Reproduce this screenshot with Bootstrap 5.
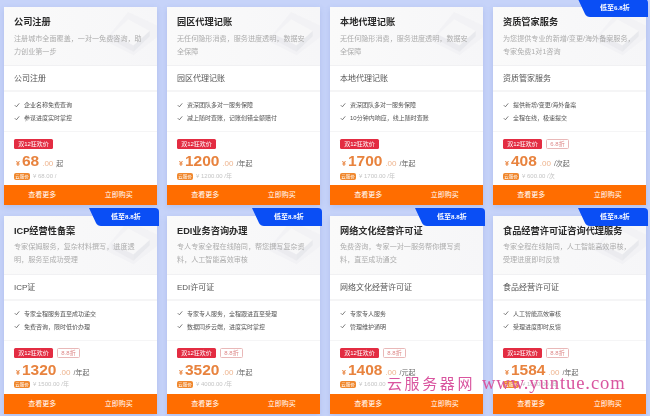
<!doctype html>
<html lang="zh"><head><meta charset="utf-8"><title>服务</title>
<link href="https://cdn.jsdelivr.net/npm/bootstrap@5.3.0/dist/css/bootstrap.min.css" rel="stylesheet">
<style>
html,body{height:416px;overflow:hidden;background:#c6d3f9}
body{font-family:"Liberation Sans","Noto Sans CJK SC",sans-serif;position:relative}
.sheet{display:grid;grid-template-columns:repeat(4,153px);grid-auto-rows:198px;gap:10.5px 10px;padding:7px 4px 0;filter:blur(.4px)}
.offer{position:relative;background:#fff;border:0;border-radius:0;color:#333;box-shadow:0 2px 6px rgba(80,100,180,.18)}
.offer-head{position:relative;height:59px;padding:10px 10px 0;background:linear-gradient(90deg,#fafafa,#f6f6f8);overflow:hidden;flex:none;border-bottom:1px solid #f1f1f3}
.offer-art{position:absolute;right:0;top:3px;width:56px;height:50px}
.offer-title{position:relative;font-size:9.2px;line-height:11px;font-weight:700;color:#2a2a2a;margin:0 0 4.500px;white-space:nowrap}
.offer-desc{position:relative;font-size:7.1px;line-height:13px;color:#adadad;margin:0}
.offer-name{height:26px;line-height:25px;padding:0 10px;font-size:8px;color:#555;border-bottom:2px solid #f5f5f6;flex:none}
.offer-list{height:40px;padding:7px 10px 0;margin:0;list-style:none;font-size:6px;line-height:13px;color:#555;border-bottom:1px solid #f5f5f6;flex:none}
.offer-list svg{width:6px;height:6px;margin-right:4px;vertical-align:-.5px}
.offer-price{padding:7px 10px 0;flex:1 1 auto;min-height:0;overflow:hidden}
.tag-row{display:flex;gap:4px;height:10px}
.tag-red{width:39px;height:10px;background:#e32c42;color:#fff;border-radius:1.5px;font-size:6px;line-height:10px;text-align:center}
.tag-line{width:23px;height:10px;border:1px solid #e9b8b8;color:#d88;border-radius:1.5px;font-size:6px;line-height:8px;text-align:center}
.amount{display:flex;align-items:baseline;height:19px;line-height:19px;color:#e8833e;margin-top:2px;padding-left:2px}
.amount-y{font-size:7px;margin-right:2px;font-weight:700}
.amount-n{font-size:15.5px;font-weight:700}
.amount-d{font-size:8px;margin:0 3px 0 3px;color:#eeb48e}
.amount-u{font-size:7px;color:#666}
.old{display:flex;align-items:center;gap:3px;height:8px;margin-top:2px;font-size:6px;color:#c4c4c4;white-space:nowrap}
.old-tag{width:16px;height:7px;background:#f0882e;color:#fff;border-radius:2px;font-size:4.5px;line-height:7px;text-align:center}
.offer-btns{display:flex;height:20px;background:#ff6d00;flex:none}
.offer-btn{flex:1 1 0;color:#fff;font-size:7px;line-height:20px;text-align:center;padding:0;border:0;border-radius:0;background:transparent}
.ribbon{position:absolute;top:-8px;right:-2px;width:70px;height:18px;z-index:2;color:#fff;font:700 7px/18px "Liberation Serif","Noto Sans CJK SC",serif;padding-left:22px}
.ribbon svg{position:absolute;inset:0;width:70px;height:18px;z-index:-1}
.mark-wm{position:absolute;left:387px;top:372px;z-index:5;white-space:nowrap;color:#d9559f;font-family:"Liberation Serif","Noto Sans CJK SC",serif;font-size:15px;line-height:22px}
.mark-cn{letter-spacing:2.6px;margin-right:7px}
.mark-en{font-size:18.6px;letter-spacing:.9px}
</style></head>
<body>
<svg width="0" height="0" class="position-absolute">
<defs>
<symbol id="art" viewBox="0 0 62 55"><path d="M30 2 62 17V30L36 50 4 34Z" fill="#efeff2" opacity=".65"/><path d="M30 10 54 23 36 39 12 27Z" fill="#f7f7f8"/><path d="M12 27 36 39V46L12 33Z" fill="#e8e8ec" opacity=".7"/><path d="M36 39 54 23V29L36 46Z" fill="#e4e5e9" opacity=".7"/></symbol>
<symbol id="tick" viewBox="0 0 8 8"><path d="M1 4.200 3.200 6.400 7 1.800" fill="none" stroke="#555" stroke-width="1"/></symbol>
<symbol id="rib" viewBox="0 0 70 18"><path d="M0 0H66Q70 0 70 4V18H12Q8.500 18 7 15Z" fill="#0a4ef5"/></symbol>
</defs></svg>
<main class="sheet">

<article class="card offer d-flex flex-column">
<header class="offer-head"><svg class="offer-art"><use href="#art"/></svg><h3 class="offer-title">公司注册</h3><p class="offer-desc">注册城市全面覆盖，一对一免费咨询，助力创业第一步</p></header>
<div class="offer-name">公司注册</div>
<ul class="offer-list"><li><svg><use href="#tick"/></svg>企业名称免费查询</li><li><svg><use href="#tick"/></svg>参谋进度实时掌控</li></ul>
<div class="offer-price"><div class="tag-row"><span class="tag-red">双12狂欢价</span></div><div class="amount"><span class="amount-y">¥</span><span class="amount-n">68</span><span class="amount-d">.00</span><span class="amount-u">起</span></div><div class="old"><span class="old-tag">云服价</span>¥ 68.00 /</div></div>
<div class="offer-btns"><a class="btn offer-btn">查看更多</a><a class="btn offer-btn">立即购买</a></div>
</article>

<article class="card offer d-flex flex-column">
<header class="offer-head"><svg class="offer-art"><use href="#art"/></svg><h3 class="offer-title">园区代理记账</h3><p class="offer-desc">无任何隐形消费，服务进度透明，数据安全保障</p></header>
<div class="offer-name">园区代理记账</div>
<ul class="offer-list"><li><svg><use href="#tick"/></svg>资深团队多对一服务保障</li><li><svg><use href="#tick"/></svg>减上随时查账，记账创错全额赔付</li></ul>
<div class="offer-price"><div class="tag-row"><span class="tag-red">双12狂欢价</span></div><div class="amount"><span class="amount-y">¥</span><span class="amount-n">1200</span><span class="amount-d">.00</span><span class="amount-u">/年起</span></div><div class="old"><span class="old-tag">云服价</span>¥ 1200.00 /年</div></div>
<div class="offer-btns"><a class="btn offer-btn">查看更多</a><a class="btn offer-btn">立即购买</a></div>
</article>

<article class="card offer d-flex flex-column">
<header class="offer-head"><svg class="offer-art"><use href="#art"/></svg><h3 class="offer-title">本地代理记账</h3><p class="offer-desc">无任何隐形消费，服务进度透明，数据安全保障</p></header>
<div class="offer-name">本地代理记账</div>
<ul class="offer-list"><li><svg><use href="#tick"/></svg>资深团队多对一服务保障</li><li><svg><use href="#tick"/></svg>10分钟内响应，线上随时查账</li></ul>
<div class="offer-price"><div class="tag-row"><span class="tag-red">双12狂欢价</span></div><div class="amount"><span class="amount-y">¥</span><span class="amount-n">1700</span><span class="amount-d">.00</span><span class="amount-u">/年起</span></div><div class="old"><span class="old-tag">云服价</span>¥ 1700.00 /年</div></div>
<div class="offer-btns"><a class="btn offer-btn">查看更多</a><a class="btn offer-btn">立即购买</a></div>
</article>

<article class="card offer d-flex flex-column">
<div class="ribbon"><svg><use href="#rib"/></svg>低至6.8折</div>
<header class="offer-head"><svg class="offer-art"><use href="#art"/></svg><h3 class="offer-title">资质管家服务</h3><p class="offer-desc">为您提供专业的新增/变更/海外备案服务，专家免费1对1咨询</p></header>
<div class="offer-name">资质管家服务</div>
<ul class="offer-list"><li><svg><use href="#tick"/></svg>提供新增/变更/海外备案</li><li><svg><use href="#tick"/></svg>全程在线，极速提交</li></ul>
<div class="offer-price"><div class="tag-row"><span class="tag-red">双12狂欢价</span><span class="tag-line">6.8折</span></div><div class="amount"><span class="amount-y">¥</span><span class="amount-n">408</span><span class="amount-d">.00</span><span class="amount-u">/次起</span></div><div class="old"><span class="old-tag">云服价</span>¥ 600.00 /次</div></div>
<div class="offer-btns"><a class="btn offer-btn">查看更多</a><a class="btn offer-btn">立即购买</a></div>
</article>

<article class="card offer d-flex flex-column">
<div class="ribbon"><svg><use href="#rib"/></svg>低至8.8折</div>
<header class="offer-head"><svg class="offer-art"><use href="#art"/></svg><h3 class="offer-title">ICP经营性备案</h3><p class="offer-desc">专家保姆服务，复杂材料撰写，进度透明，服务至成功受理</p></header>
<div class="offer-name">ICP证</div>
<ul class="offer-list"><li><svg><use href="#tick"/></svg>专家全程服务直至成功递交</li><li><svg><use href="#tick"/></svg>免费咨询，限时低价办理</li></ul>
<div class="offer-price"><div class="tag-row"><span class="tag-red">双12狂欢价</span><span class="tag-line">8.8折</span></div><div class="amount"><span class="amount-y">¥</span><span class="amount-n">1320</span><span class="amount-d">.00</span><span class="amount-u">/年起</span></div><div class="old"><span class="old-tag">云服价</span>¥ 1500.00 /年</div></div>
<div class="offer-btns"><a class="btn offer-btn">查看更多</a><a class="btn offer-btn">立即购买</a></div>
</article>

<article class="card offer d-flex flex-column">
<div class="ribbon"><svg><use href="#rib"/></svg>低至8.8折</div>
<header class="offer-head"><svg class="offer-art"><use href="#art"/></svg><h3 class="offer-title">EDI业务咨询办理</h3><p class="offer-desc">专人专家全程在线陪同，帮您撰写复杂资料，人工智能高效审核</p></header>
<div class="offer-name">EDI许可证</div>
<ul class="offer-list"><li><svg><use href="#tick"/></svg>专家专人服务，全程跟进直至受理</li><li><svg><use href="#tick"/></svg>数据同步云端，进度实时掌控</li></ul>
<div class="offer-price"><div class="tag-row"><span class="tag-red">双12狂欢价</span><span class="tag-line">8.8折</span></div><div class="amount"><span class="amount-y">¥</span><span class="amount-n">3520</span><span class="amount-d">.00</span><span class="amount-u">/年起</span></div><div class="old"><span class="old-tag">云服价</span>¥ 4000.00 /年</div></div>
<div class="offer-btns"><a class="btn offer-btn">查看更多</a><a class="btn offer-btn">立即购买</a></div>
</article>

<article class="card offer d-flex flex-column">
<div class="ribbon"><svg><use href="#rib"/></svg>低至8.8折</div>
<header class="offer-head"><h3 class="offer-title">网络文化经营许可证</h3><p class="offer-desc">免费咨询，专家一对一服务帮你撰写资料，直至成功通交</p></header>
<div class="offer-name">网络文化经营许可证</div>
<ul class="offer-list"><li><svg><use href="#tick"/></svg>专家专人服务</li><li><svg><use href="#tick"/></svg>管理维护通明</li></ul>
<div class="offer-price"><div class="tag-row"><span class="tag-red">双12狂欢价</span><span class="tag-line">8.8折</span></div><div class="amount"><span class="amount-y">¥</span><span class="amount-n">1408</span><span class="amount-d">.00</span><span class="amount-u">/元起</span></div><div class="old"><span class="old-tag">云服价</span>¥ 1600.00</div></div>
<div class="offer-btns"><a class="btn offer-btn">查看更多</a><a class="btn offer-btn">立即购买</a></div>
</article>

<article class="card offer d-flex flex-column">
<div class="ribbon"><svg><use href="#rib"/></svg>低至8.8折</div>
<header class="offer-head"><svg class="offer-art"><use href="#art"/></svg><h3 class="offer-title">食品经营许可证咨询代理服务</h3><p class="offer-desc">专家全程在线陪同，人工智能高效审核，受理进度即时反馈</p></header>
<div class="offer-name">食品经营许可证</div>
<ul class="offer-list"><li><svg><use href="#tick"/></svg>人工智能高效审核</li><li><svg><use href="#tick"/></svg>受理进度即时反馈</li></ul>
<div class="offer-price"><div class="tag-row"><span class="tag-red">双12狂欢价</span><span class="tag-line">8.8折</span></div><div class="amount"><span class="amount-y">¥</span><span class="amount-n">1584</span><span class="amount-d">.00</span><span class="amount-u">/年起</span></div><div class="old"><span class="old-tag">云服价</span>¥ 1800.00 /年</div></div>
<div class="offer-btns"><a class="btn offer-btn">查看更多</a><a class="btn offer-btn">立即购买</a></div>
</article>

</main>
<div class="mark-wm"><span class="mark-cn">云服务器网</span><span class="mark-en">www.yuntue.com</span></div>
</body></html>
